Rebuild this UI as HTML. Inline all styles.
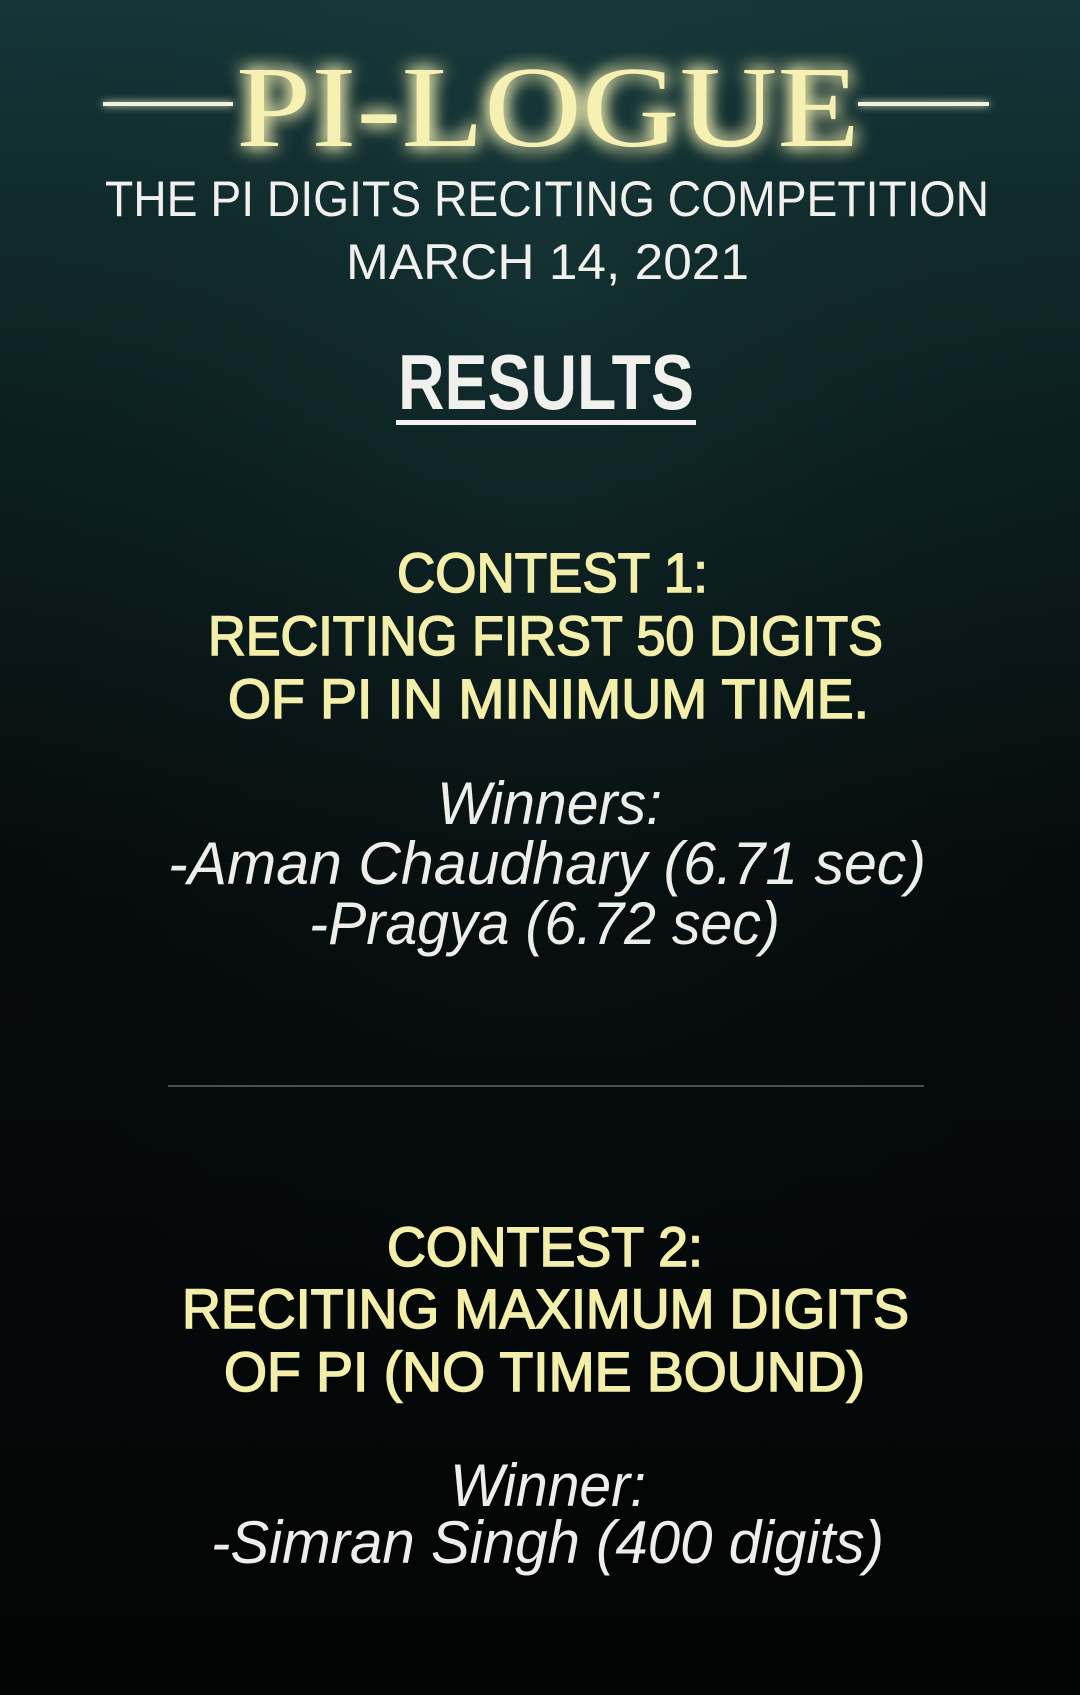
<!DOCTYPE html>
<html><head><meta charset="utf-8"><style>
html,body{margin:0;padding:0;background:#000;}
svg{display:block;}
</style></head><body>
<svg width="1080" height="1695" viewBox="0 0 1080 1695" xmlns="http://www.w3.org/2000/svg">
<defs>
<linearGradient id="bg" x1="0" y1="0" x2="0" y2="1">
<stop offset="0" stop-color="#173b3c"/>
<stop offset="0.22" stop-color="#0d2324"/>
<stop offset="0.5" stop-color="#060c0d"/>
<stop offset="1" stop-color="#030404"/>
</linearGradient>
<radialGradient id="vig" cx="0.5" cy="0.15" r="0.8">
<stop offset="0" stop-color="#1a3d3e" stop-opacity="0.4"/>
<stop offset="1" stop-color="#000" stop-opacity="0"/>
</radialGradient>
<filter id="glow" x="-20%" y="-50%" width="140%" height="200%">
<feGaussianBlur stdDeviation="9" result="b"/>
<feMerge><feMergeNode in="b"/><feMergeNode in="b"/><feMergeNode in="SourceGraphic"/></feMerge>
</filter>
<filter id="glow2" x="-20%" y="-300%" width="140%" height="700%">
<feGaussianBlur stdDeviation="4" result="b"/>
<feMerge><feMergeNode in="b"/><feMergeNode in="SourceGraphic"/></feMerge>
</filter>
</defs>
<rect width="1080" height="1695" fill="url(#bg)"/>
<rect width="1080" height="1695" fill="url(#vig)"/>

<g filter="url(#glow2)">
<rect x="103" y="102" width="130" height="4" fill="#f4f2dc"/>
<rect x="858" y="102" width="131" height="4" fill="#f4f2dc"/>
</g>
<text x="236" y="146" textLength="624" lengthAdjust="spacingAndGlyphs" font-family="Liberation Serif, serif" font-size="116" fill="#f6f1b3" filter="url(#glow)">PI-LOGUE</text>

<g font-family="Liberation Sans, sans-serif" fill="#f0f0ec">
<text x="105" y="216" textLength="884" lengthAdjust="spacingAndGlyphs" font-size="50">THE PI DIGITS RECITING COMPETITION</text>
<text x="346" y="279" textLength="403" lengthAdjust="spacingAndGlyphs" font-size="50">MARCH 14, 2021</text>
<text x="398" y="409" textLength="296" lengthAdjust="spacingAndGlyphs" font-size="78" font-weight="bold">RESULTS</text>
<rect x="396" y="420" width="300" height="5" fill="#f2f2ee"/>
</g>

<g font-family="Liberation Sans, sans-serif" fill="#f3eeaa" font-size="56" stroke="#f3eeaa" stroke-width="1.6">
<text x="397" y="592" textLength="311" lengthAdjust="spacingAndGlyphs">CONTEST 1:</text>
<text x="208" y="655" textLength="675" lengthAdjust="spacingAndGlyphs">RECITING FIRST 50 DIGITS</text>
<text x="228" y="718" textLength="641" lengthAdjust="spacingAndGlyphs">OF PI IN MINIMUM TIME.</text>
<text x="387" y="1266" textLength="316" lengthAdjust="spacingAndGlyphs">CONTEST 2:</text>
<text x="182" y="1328" textLength="727" lengthAdjust="spacingAndGlyphs">RECITING MAXIMUM DIGITS</text>
<text x="224" y="1391" textLength="641" lengthAdjust="spacingAndGlyphs">OF PI (NO TIME BOUND)</text>
</g>

<g font-family="Liberation Sans, sans-serif" fill="#ededea" font-size="60" font-style="italic">
<text x="437" y="824" textLength="225" lengthAdjust="spacingAndGlyphs">Winners:</text>
<text x="168" y="884" textLength="758" lengthAdjust="spacingAndGlyphs">-Aman Chaudhary (6.71 sec)</text>
<text x="309" y="944" textLength="471" lengthAdjust="spacingAndGlyphs">-Pragya (6.72 sec)</text>
<text x="450" y="1506" textLength="196" lengthAdjust="spacingAndGlyphs">Winner:</text>
<text x="211" y="1563" textLength="673" lengthAdjust="spacingAndGlyphs">-Simran Singh (400 digits)</text>
</g>

<rect x="168" y="1085" width="756" height="2" fill="#4a4f50"/>
</svg>
</body></html>
